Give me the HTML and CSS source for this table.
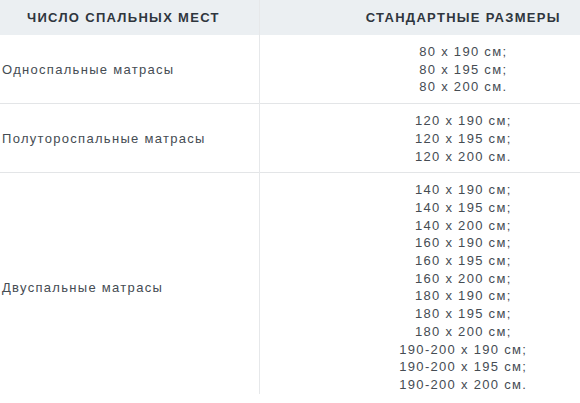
FILE: index.html
```html
<!DOCTYPE html>
<html lang="ru">
<head>
<meta charset="utf-8">
<title>Размеры матрасов</title>
<link rel="stylesheet" href="styles.css">
</head>
<body>
<table class="sizes">
  <colgroup>
    <col class="c-type">
    <col class="c-size">
  </colgroup>
  <thead>
    <tr>
      <th class="col-type">Число спальных мест</th>
      <th class="col-size">Стандартные размеры</th>
    </tr>
  </thead>
  <tbody>
    <tr>
      <td class="col-type">Односпальные матрасы</td>
      <td class="col-size">80 x 190 см;<br>80 x 195 см;<br>80 x 200 см.</td>
    </tr>
    <tr>
      <td class="col-type">Полутороспальные матрасы</td>
      <td class="col-size">120 x 190 см;<br>120 x 195 см;<br>120 x 200 см.</td>
    </tr>
    <tr class="last">
      <td class="col-type">Двуспальные матрасы</td>
      <td class="col-size">140 x 190 см;<br>140 x 195 см;<br>140 x 200 см;<br>160 x 190 см;<br>160 x 195 см;<br>160 x 200 см;<br>180 x 190 см;<br>180 x 195 см;<br>180 x 200 см;<br>190-200 x 190 см;<br>190-200 x 195 см;<br>190-200 x 200 см.</td>
    </tr>
  </tbody>
</table>
</body>
</html>
```

FILE: styles.css
```css
html, body {
  margin: 0;
  padding: 0;
  background: #ffffff;
  overflow: hidden;
}

.sizes {
  width: 100%;
  table-layout: fixed;
  border-collapse: collapse;
  font-family: "Liberation Sans", Arial, sans-serif;
  font-size: 13px;
  letter-spacing: 1.3px;
  color: #454c53;
}

.sizes .c-type {
  width: 259px;
}

.sizes th {
  height: 35px;
  padding: 0;
  background: #ebeff2;
  color: #2f363e;
  font-size: 13px;
  font-weight: bold;
  letter-spacing: 1.3px;
  text-transform: uppercase;
  vertical-align: middle;
  white-space: nowrap;
}

.sizes th.col-type {
  text-align: left;
  padding-left: 27px;
}

.sizes th.col-size {
  text-align: center;
  padding-left: 87px;
}

.sizes td {
  padding: 8px 0 7px;
  line-height: 17.7px;
  vertical-align: middle;
  border-top: 1px solid #e3e5e7;
}

.sizes tbody tr:first-child td {
  border-top: none;
}

.sizes tr.last td {
  padding-bottom: 0;
}

.sizes .col-type {
  border-right: 1px solid #e6e8ea;
}

.sizes td.col-type {
  padding-left: 2px;
  text-align: left;
}

.sizes td.col-size {
  text-align: center;
  padding-left: 87px;
}
```
